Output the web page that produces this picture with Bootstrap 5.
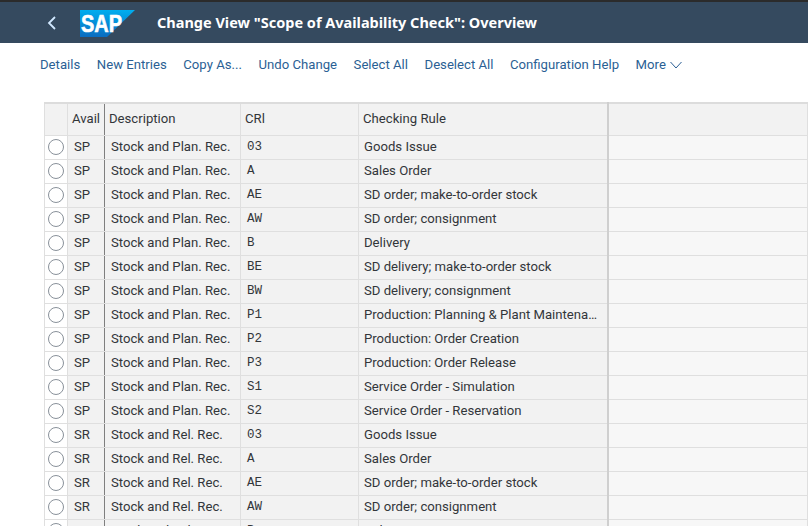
<!DOCTYPE html>
<html lang="en">
<head>
    <meta charset="UTF-8">
    <title>Change View "Scope of Availability Check": Overview</title>
    <link href="https://cdn.jsdelivr.net/npm/bootstrap@5.3.0/dist/css/bootstrap.min.css" rel="stylesheet">
    <style>
        html, body { height: 526px; overflow: hidden; }
        body { font-family: Roboto, "Noto Sans", sans-serif; font-size: 13.15px; color: #32363a; background: #fff; }
        .top-strip { height: 2px; background: #2b2b2b; }
        .shell-bar { height: 41px; background: #354a5f; color: #fff; }
        .back-btn { width: 80px; padding-left: 46px; }
        .sap-logo { width: 55px; height: 27px; margin-top: 2px; }
        .shell-title { font-family: "Noto Sans", sans-serif; font-size: 14.5px; font-weight: 700; margin-left: 22px; white-space: nowrap; }
        .tool-bar { height: 59px; padding-left: 40px; padding-top: 13px; gap: 16.6px; }
        .tool-link { color: #2b5f94; font-size: 13.15px; text-decoration: none; white-space: nowrap; line-height: 18px; }
        .grid-wrap { margin-left: 44px; }
        .sap-grid { table-layout: fixed; width: 764px; border-collapse: collapse; background: #f7f7f7; }
        .sap-grid th, .sap-grid td { border: 1px solid #dfdfdf; background: #f2f2f2; padding: 0 0 0 4px; font-weight: 400; font-size: 13.15px; color: #32363a; white-space: nowrap; overflow: hidden; text-overflow: ellipsis; }
        .sap-grid th { height: 32px; border-top: 2px solid #dcdcdc; padding-bottom: 1px; }
        .sap-grid td { height: 24px; }
        .sap-grid td.sel-cell { background: #fff; padding: 0; text-align: center; }
        .sap-grid th.key-end, .sap-grid td.key-end { border-right: 1px solid #7f7f7f; }
        .sap-grid th.last-col, .sap-grid td.last-col { border-right: 2px solid #cfcfcf; }
        .sap-grid td.filler { background: #f7f7f7; }
        .sap-grid th.filler { background: #f2f2f2; }
        .sap-grid td.mono { font-family: "Liberation Mono", monospace; font-size: 12.5px; }
        .sap-grid td.inset { padding-left: 6px; }
        .sap-grid td.last-col.inset { padding-left: 5px; padding-right: 5px; }
        .radio-dot { display: block; width: 16px; height: 16px; border: 1px solid #89919a; border-radius: 50%; background: #fff; margin: 0 auto; }
    </style>
</head>
<body>
<div class="top-strip"></div>
<div class="shell-bar d-flex align-items-center">
    <div class="back-btn d-flex align-items-center">
        <svg width="12" height="16" viewBox="0 0 12 16"><path d="M9 2 L3 8 L9 14" fill="none" stroke="#d1e8ff" stroke-width="1.8"/></svg>
    </div>
    <svg class="sap-logo" viewBox="0 0 55 27">
        <defs>
            <linearGradient id="sapBlue" x1="0" y1="0" x2="0" y2="1">
                <stop offset="0" stop-color="#00aeef"/>
                <stop offset="1" stop-color="#0a6cc0"/>
            </linearGradient>
        </defs>
        <polygon points="0,0 55,0 27,27 0,27" fill="url(#sapBlue)"/>
        <text x="1" y="22" fill="#fff" stroke="#fff" stroke-width="0.6" font-family="Liberation Sans, sans-serif" font-size="23" font-weight="700" textLength="41" lengthAdjust="spacingAndGlyphs">SAP</text>
    </svg>
    <div class="shell-title">Change View "Scope of Availability Check": Overview</div>
</div>
<div class="tool-bar d-flex align-items-start">
    <a class="tool-link" href="#">Details</a>
    <a class="tool-link" href="#">New Entries</a>
    <a class="tool-link" href="#">Copy As...</a>
    <a class="tool-link" href="#">Undo Change</a>
    <a class="tool-link" href="#">Select All</a>
    <a class="tool-link" href="#">Deselect All</a>
    <a class="tool-link" href="#">Configuration Help</a>
    <a class="tool-link d-flex align-items-center gap-1" href="#">More
        <svg width="12" height="8" viewBox="0 0 12 8"><path d="M0.5 1 L6 7 L11.5 1" fill="none" stroke="#2b5f94" stroke-width="1"/></svg>
    </a>
</div>
<div class="grid-wrap">
    <table class="sap-grid" id="scopeTable">
        <colgroup>
            <col style="width:23px"><col style="width:37px"><col style="width:136px"><col style="width:118px"><col style="width:249px"><col>
        </colgroup>
        <thead>
        <tr>
            <th></th>
            <th class="key-end">Avail</th>
            <th>Description</th>
            <th>CRl</th>
            <th class="last-col">Checking Rule</th>
            <th class="filler"></th>
        </tr>
        </thead>
        <tbody>
        <!-- rows filled in below -->
        </tbody>
    </table>
</div>

<script>
    const plan = "Stock and Plan. Rec.";
    const rel = "Stock and Rel. Rec.";
    const rows = [
        ["SP", plan, "03", "Goods Issue"],
        ["SP", plan, "A", "Sales Order"],
        ["SP", plan, "AE", "SD order; make-to-order stock"],
        ["SP", plan, "AW", "SD order; consignment"],
        ["SP", plan, "B", "Delivery"],
        ["SP", plan, "BE", "SD delivery; make-to-order stock"],
        ["SP", plan, "BW", "SD delivery; consignment"],
        ["SP", plan, "P1", "Production: Planning & Plant Maintenance"],
        ["SP", plan, "P2", "Production: Order Creation"],
        ["SP", plan, "P3", "Production: Order Release"],
        ["SP", plan, "S1", "Service Order - Simulation"],
        ["SP", plan, "S2", "Service Order - Reservation"],
        ["SR", rel, "03", "Goods Issue"],
        ["SR", rel, "A", "Sales Order"],
        ["SR", rel, "AE", "SD order; make-to-order stock"],
        ["SR", rel, "AW", "SD order; consignment"],
        ["SR", rel, "B", "Delivery"]
    ];
    const tableBody = document.querySelector("#scopeTable tbody");
    rows.forEach(r => {
        const tr = document.createElement("tr");
        tr.innerHTML = `<td class="sel-cell"><span class="radio-dot"></span></td>
            <td class="key-end inset">${r[0]}</td>
            <td class="inset">${r[1]}</td>
            <td class="mono inset">${r[2]}</td>
            <td class="last-col inset">${r[3].replace("&", "&amp;")}</td>
            <td class="filler"></td>`;
        tableBody.appendChild(tr);
    });
</script>
<script src="https://cdn.jsdelivr.net/npm/bootstrap@5.3.0/dist/js/bootstrap.bundle.min.js"></script>
</body>
</html>
